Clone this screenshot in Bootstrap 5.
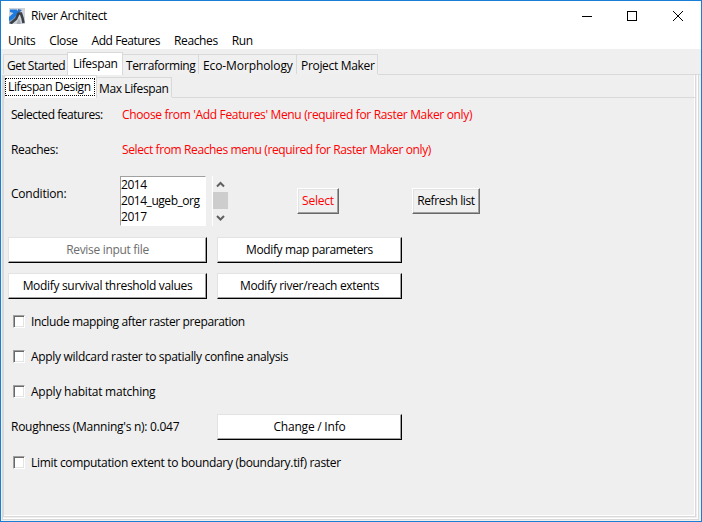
<!DOCTYPE html>
<html lang="en">
<head>
<meta charset="utf-8">
<title>River Architect</title>
<link href="https://cdn.jsdelivr.net/npm/bootstrap@5.3.0/dist/css/bootstrap.min.css" rel="stylesheet">
<style>
body{font-family:"Open Sans","Noto Sans",sans-serif;font-size:12px;line-height:16px;letter-spacing:-.22px;color:#000;background:#efefef;white-space:nowrap}
.win{width:702px;height:522px;border:1px solid #1a7fd4;background:#efefef}
.titlebar{height:29px;padding-left:8px}
.titlebar svg{flex:none}
.caption-text{margin-left:6px}
.menubar{height:19px;padding:3px 0 0 7px;gap:14px}
.tabs-outer{height:26px;padding:3px 0 0 2px}
.wtab{border:1px solid #d9d9d9;border-bottom:0;border-right:0;background:#f0f0f0;padding:3px 0 0 3px;height:20px;margin-top:2px;flex:none}
.wtab.last-tab{border-right:1px solid #d9d9d9}
.wtab.roomy{padding-left:4px}
.wtab.on{background:#fff;height:23px;margin-top:0;padding:3px 0 0 5px;border-right:1px solid #d9d9d9}
.wtab.on.sub-a{padding:2px 0 0 0}
.strip-line{flex:1;align-self:flex-end;border-bottom:1px solid #d9d9d9}
.pane{height:445px;width:697px;margin-left:1px;border:1px solid #d9d9d9;border-top:0;box-shadow:inset -1px -1px #fff}
.pane-in{height:442px;width:693px;border:1px solid #d9d9d9;border-top:0;box-shadow:inset -1px -1px #fff}
.subtabs{height:23px}
.focus-box{border:1px dotted #000;height:18px;width:90px;line-height:16px;padding:0 2px}
.rw{display:flex;align-items:center;height:36px;padding-left:7px}
.chk{height:35px}
.lab{width:111px;flex:none}
.red,.tkbtn.red{color:#f00}
.listb{width:86px;height:50px;margin-top:8px;border:1px solid #a0a0a0;border-right-color:#fff;border-bottom-color:#fff;background:#fff}
.listb div{height:16px}
.sbar{width:17px;height:50px;margin:8px 0 0 6px;border-left:1px solid #fff;padding-top:3px}
.thumb{width:15px;height:17px;background:#cdcdcd}
.tkbtn{height:26px;border:1px solid;border-color:#fff #696969 #696969 #fff;box-shadow:inset -1px -1px #a0a0a0,inset 1px 1px #e3e3e3;background:#f0f0f0;border-radius:0;padding:0;font:inherit;letter-spacing:inherit;color:#000;flex:none}
.wide{background:#fff;border-color:#e3e3e3 #000 #000 #e3e3e3;box-shadow:inset -1px -1px #a0a0a0}
.w1{width:199px;margin-right:10px}
.w2{width:185px}
.btns{padding-left:4px}
.box{width:12px;height:13px;background:#fff;border:1px solid;border-color:#a0a0a0 #fff #fff #a0a0a0;box-shadow:inset 1px 1px #696969,inset -1px -1px #e3e3e3;margin:0 6px 0 2px;flex:none}
.ls-a,.tkbtn.ls-a{letter-spacing:-.32px}
.ls-b,.tkbtn.ls-b{letter-spacing:-.38px}
.ls-c,.tkbtn.ls-c{letter-spacing:-.46px}
.ls-d{letter-spacing:-.1px}
</style>
<script src="https://cdn.jsdelivr.net/npm/bootstrap@5.3.0/dist/js/bootstrap.bundle.min.js"></script>
</head>
<body class="overflow-hidden">
<main class="win overflow-hidden">
  <header class="bg-white">
    <div class="titlebar d-flex align-items-center">
      <svg width="16" height="16" viewBox="0 0 16 16"><rect width="16" height="16" fill="#cfd4da"/><path d="M0 10l5-1 2 3-4 4H0z" fill="#8fa3bd"/><path d="M1 1.500h6.500l2 2-1 3L4 11l-4 2V9l4.500-4L1 4z" fill="#1c7ae0"/><path d="M9 1l4 1-2 2-3 5-3 2 4-5z" fill="#3b6fb5"/><path d="M1.500 15.500L7 11l2.500-5.500h2.500l1.500 4.500 1 5" fill="none" stroke="#3b3f46" stroke-width="2.600"/><path d="M7.500 16l2.500-6 2 6z" fill="#a9adb3"/></svg>
      <span class="caption-text ls-a">River Architect</span>
      <svg class="ms-auto" width="119" height="14" viewBox="0 0 119 14" fill="none" stroke="#000" shape-rendering="crispEdges"><path d="M0 7.500h10M45.500 2.500h9v9h-9z"/><path d="M91 2l10 10M101 2L91 12" shape-rendering="auto"/></svg>
    </div>
    <nav class="menubar d-flex ls-b"><span>Units</span><span>Close</span><span class="ls-c">Add Features</span><span>Reaches</span><span>Run</span></nav>
  </header>
  <div class="tabs-outer d-flex">
    <div class="wtab" style="width:64px;letter-spacing:-.5px">Get Started</div><div class="wtab on ls-a" style="width:56px">Lifespan</div><div class="wtab border-start-0 ls-b" style="width:75px">Terraforming</div><div class="wtab roomy ls-d" style="width:98px">Eco-Morphology</div><div class="wtab roomy last-tab ls-a" style="width:82px">Project Maker</div><div class="strip-line"></div>
  </div>
  <section class="pane">
    <div class="pane-in">
      <div class="subtabs d-flex">
        <div class="wtab on sub-a ls-b" style="width:93px"><div class="focus-box">Lifespan Design</div></div><div class="wtab last-tab border-start-0 ls-b" style="width:75px;padding-left:2px">Max Lifespan</div><div class="strip-line"></div>
      </div>
      <div class="rw" style="height:34px"><div class="lab ls-c">Selected features:</div><div class="red" style="letter-spacing:-.34px">Choose from 'Add Features' Menu (required for Raster Maker only)</div></div>
      <div class="rw"><div class="lab ls-a">Reaches:</div><div class="red ls-b">Select from Reaches menu (required for Raster Maker only)</div></div>
      <div class="rw align-items-start" style="height:64px">
        <div class="lab" style="padding-top:18px;width:109px">Condition:</div>
        <div class="listb ls-c"><div>2014</div><div>2014_ugeb_org</div><div>2017</div></div>
        <div class="sbar"><svg class="d-block" width="15" height="13" viewBox="0 0 15 13"><path d="M4 7.500L7.500 4 11 7.500" fill="none" stroke="#606060" stroke-width="2"/></svg><div class="thumb"></div><svg class="d-block" width="15" height="14" viewBox="0 0 15 14"><path d="M4 7L7.500 10.500 11 7" fill="none" stroke="#606060" stroke-width="2"/></svg></div>
        <button class="tkbtn red" style="width:42px;margin:20px 73px 0 68px">Select</button>
        <button class="tkbtn ls-b" style="width:68px;margin-top:20px">Refresh list</button>
      </div>
      <div class="rw btns"><button class="tkbtn wide w1 ls-a" style="color:#6d6d6d">Revise input file</button><button class="tkbtn wide w2 ls-b">Modify map parameters</button></div>
      <div class="rw btns"><button class="tkbtn wide w1 ls-a">Modify survival threshold values</button><button class="tkbtn wide w2 ls-a">Modify river/reach extents</button></div>
      <div class="rw chk ls-b"><span class="box"></span>Include mapping after raster preparation</div>
      <div class="rw chk ls-a"><span class="box"></span>Apply wildcard raster to spatially confine analysis</div>
      <div class="rw chk"><span class="box"></span>Apply habitat matching</div>
      <div class="rw"><div style="width:206px;letter-spacing:-.27px">Roughness (Manning's n): 0.047</div><button class="tkbtn wide w2">Change / Info</button></div>
      <div class="rw chk ls-a"><span class="box"></span>Limit computation extent to boundary (boundary.tif) raster</div>
    </div>
  </section>
</main>
</body>
</html>
